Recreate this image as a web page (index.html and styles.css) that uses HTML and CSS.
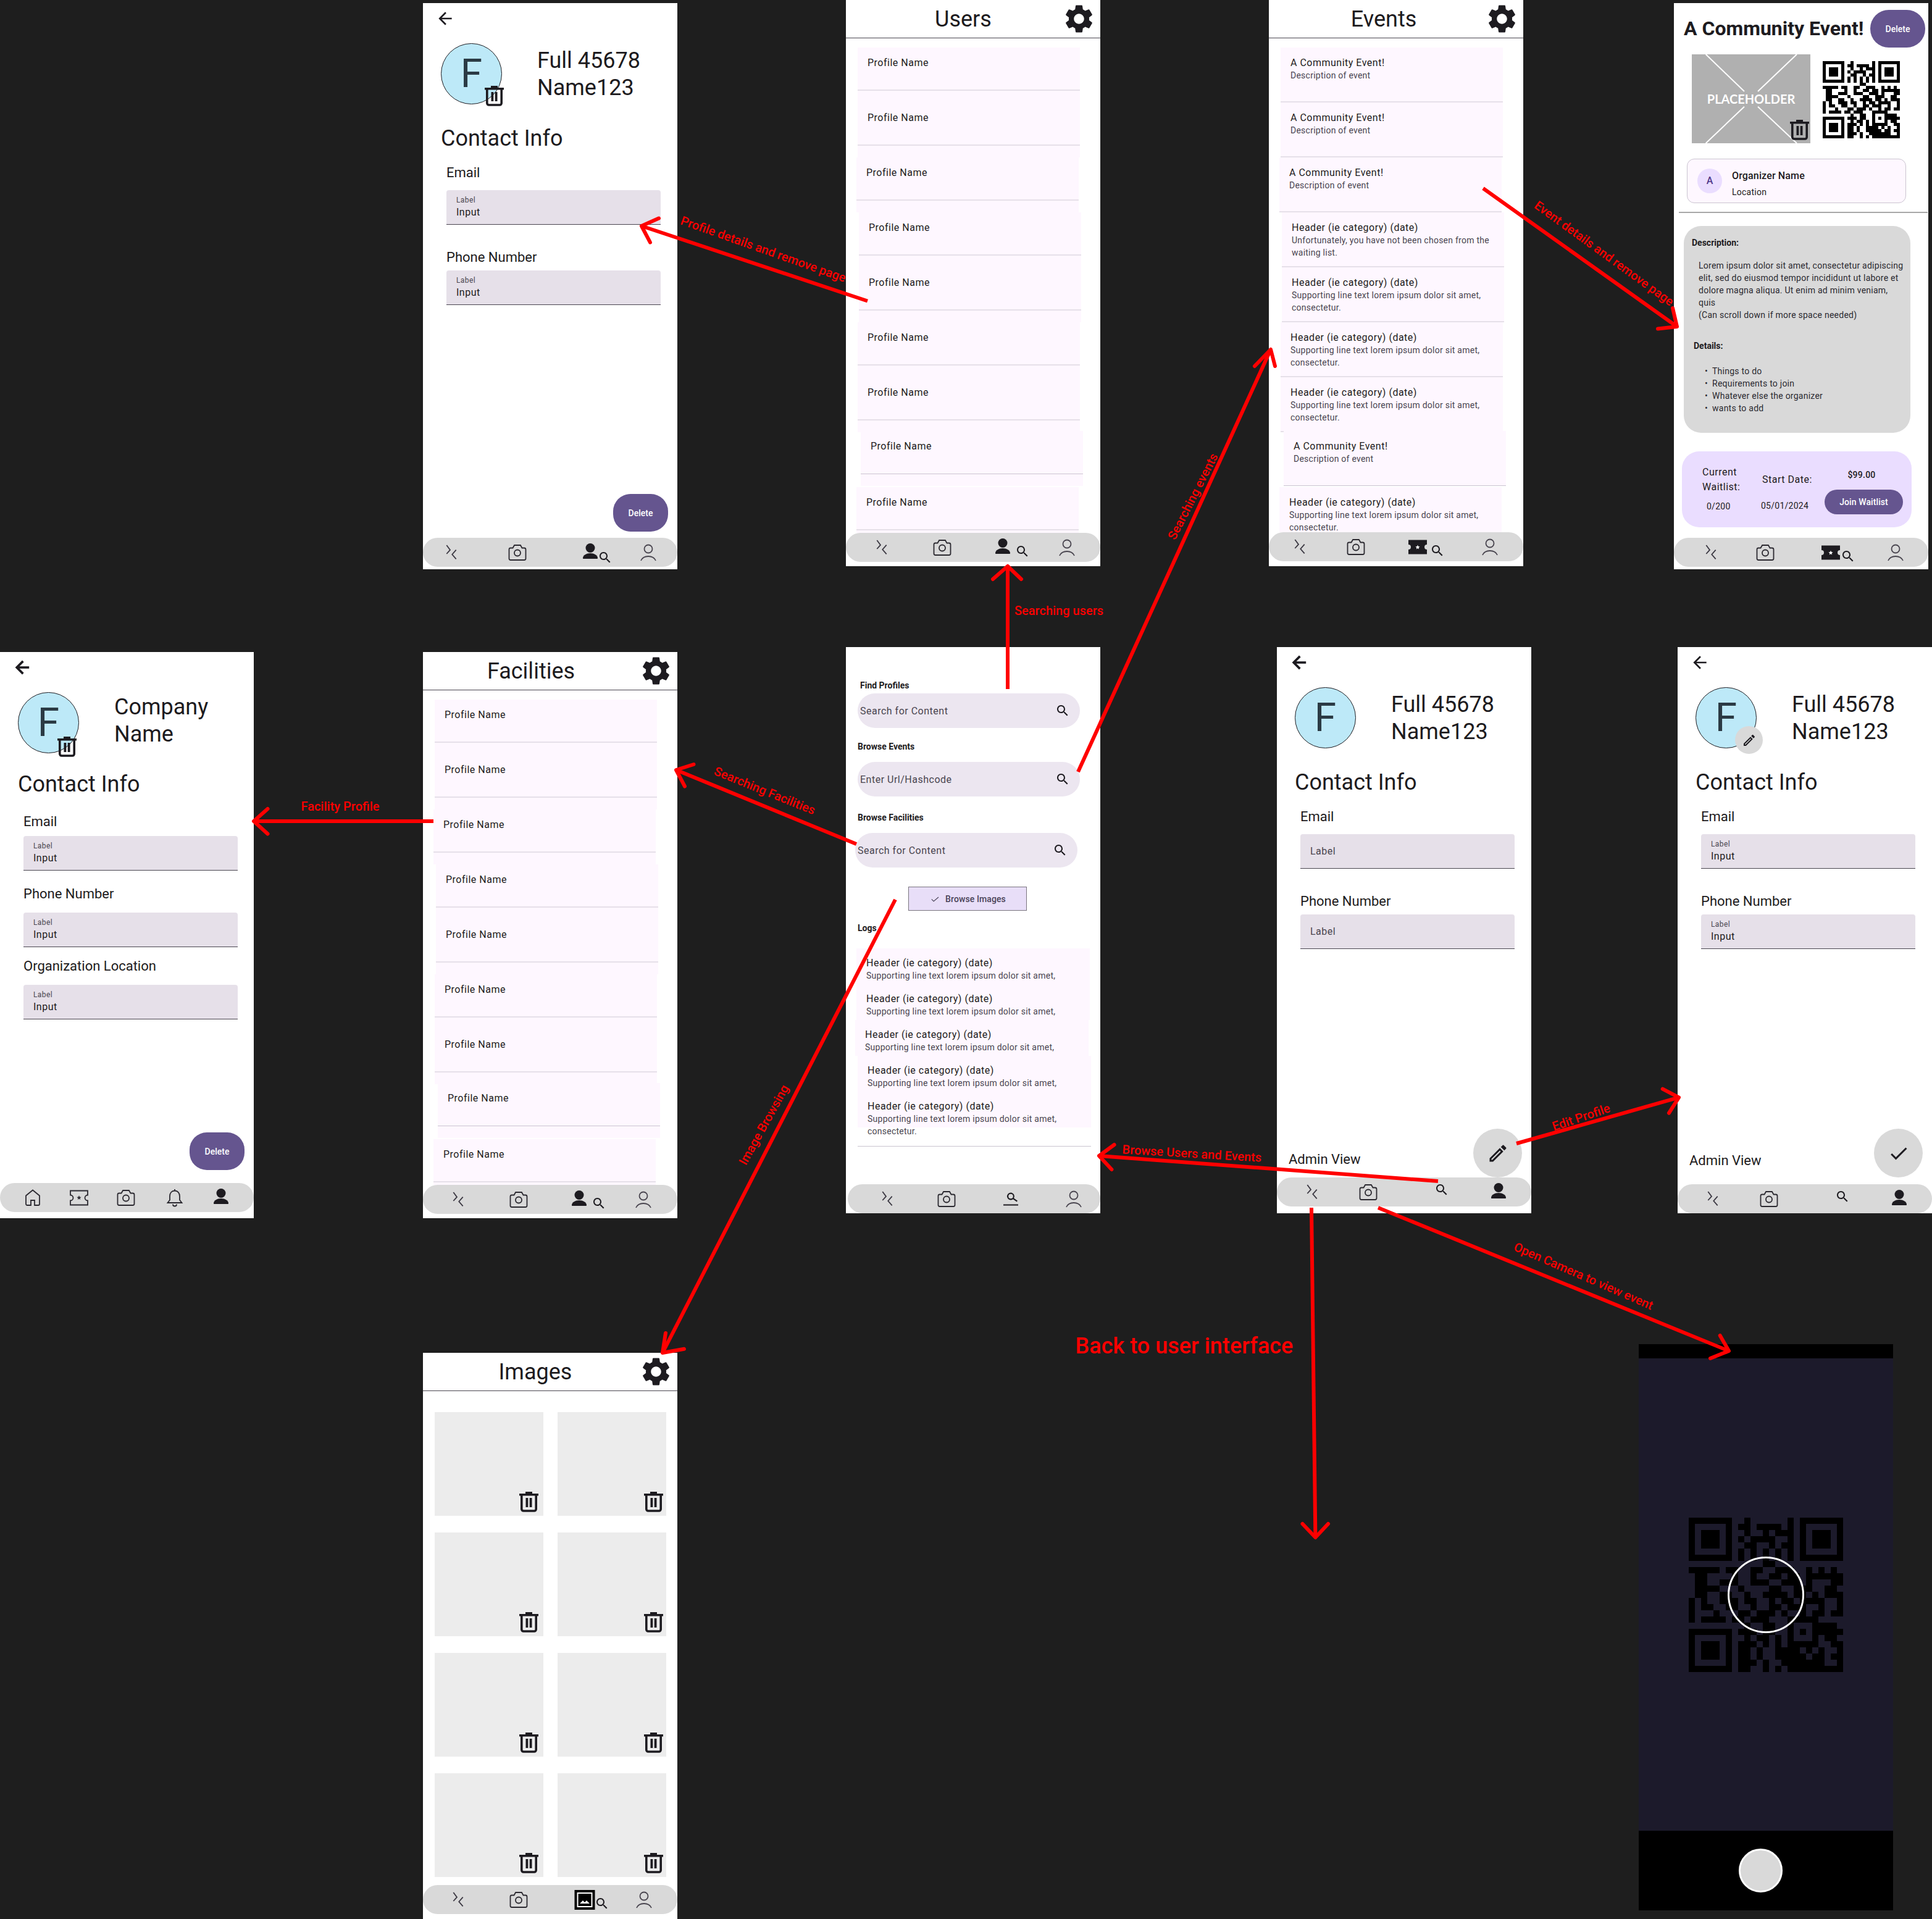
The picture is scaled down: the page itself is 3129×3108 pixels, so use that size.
FILE: index.html
```html
<!DOCTYPE html>
<html lang="en">
<head>
    <meta charset="UTF-8">
    <title>Admin Wireframes</title>
    <link rel="stylesheet" href="styles.css">
</head>
<body>
    <svg class="sprite" xmlns="http://www.w3.org/2000/svg">
        <symbol id="i-swap" viewBox="0 0 36 36"><path d="M10.3 6l5.7 7.7-5.7 6.3M25.7 13.7L19.300 21l6.400 7.300" fill="none" stroke="#3b3842" stroke-width="1.8"/></symbol>
        <symbol id="i-camera" viewBox="0 0 36 36"><path d="M7 10.500h3.500l2.600-4.500h9.800l2.600 4.500H29a2.500 2.500 0 0 1 2.500 2.500v14.500a2.500 2.500 0 0 1-2.500 2.500H7a2.500 2.500 0 0 1-2.500-2.500V13A2.500 2.500 0 0 1 7 10.500z" fill="none" stroke="#2b2930" stroke-width="1.800"/><circle cx="18" cy="18.500" r="5" fill="none" stroke="#2b2930" stroke-width="1.800"/></symbol>
        <symbol id="i-person" viewBox="0 0 36 36"><circle cx="18" cy="10.500" r="7.500" fill="#1d1b20"/><path d="M6 27c0-5 6-8 12-8s12 3 12 8c0 .8-.5 1-1 1H7c-.5 0-1-.2-1-1z" fill="#1d1b20"/></symbol>
        <symbol id="i-profile" viewBox="0 0 36 36"><circle cx="18" cy="12" r="6.500" fill="none" stroke="#49454f" stroke-width="1.800"/><path d="M6 31c2-4.500 7-7 12-7s10 2.500 12 7" fill="none" stroke="#49454f" stroke-width="1.800"/></symbol>
        <symbol id="i-search" viewBox="0 0 24 24"><path d="M15.500 14h-.79l-.28-.27C15.410 12.590 16 11.110 16 9.500 16 5.910 13.090 3 9.500 3S3 5.910 3 9.500 5.910 16 9.500 16c1.610 0 3.090-.59 4.230-1.570l.27.28v.79l5 4.990L20.490 19l-4.990-5zm-6 0C7.010 14 5 11.990 5 9.500S7.010 5 9.500 5 14 7.010 14 9.500 11.990 14 9.500 14z" fill="#1d1b20"/></symbol>
        <symbol id="i-search-line" viewBox="0 0 36 36"><path d="M18 7.500a6 6 0 1 0 3.700 10.700l6 4.300 1.300-1.800-6-4.200A6 6 0 0 0 18 7.500zm0 2.200a3.800 3.800 0 1 1 0 7.600 3.800 3.800 0 0 1 0-7.600z" fill="#1d1b20"/><path d="M6 27.500h24" stroke="#1d1b20" stroke-width="2"/></symbol>
        <symbol id="i-ticket" viewBox="0 0 36 36"><path d="M3 6.500h30v7.500a4 4 0 0 0 0 8v7.500H3V22a4 4 0 0 0 0-8z" fill="#1d1b20"/><path d="M18 14.500l1 2.500 2.600.2-2 1.700.6 2.600-2.200-1.400-2.200 1.400.6-2.600-2-1.700 2.600-.2z" fill="#fff"/></symbol>
        <symbol id="i-ticket-line" viewBox="0 0 36 36"><path d="M4 6.500h28v7a4.500 4.500 0 0 0 0 9v7H4v-7a4.500 4.500 0 0 0 0-9z" fill="none" stroke="#2b2930" stroke-width="1.800"/><path d="M18 14l1 2.500 2.600.2-2 1.700.6 2.600-2.200-1.400-2.200 1.400.6-2.600-2-1.700 2.600-.2z" fill="#2b2930"/></symbol>
        <symbol id="i-home" viewBox="0 0 36 36"><path d="M7 14.500l11-9 11 9V28a2 2 0 0 1-2 2h-6v-8h-6v8H9a2 2 0 0 1-2-2z" fill="none" stroke="#2b2930" stroke-width="1.800"/></symbol>
        <symbol id="i-bell" viewBox="0 0 36 36"><path d="M18 6.500c-5 0-8 3.800-8 9v6l-3.500 4.500h23L26 21.500v-6c0-5.200-3-9-8-9zM15 28.500a3 3 0 0 0 6 0M18 4v2.500" fill="none" stroke="#2b2930" stroke-width="1.800"/></symbol>
        <symbol id="i-image" viewBox="0 0 36 36"><rect x="1.500" y="2" width="33" height="32" fill="#000"/><rect x="6.500" y="7" width="23" height="22" fill="none" stroke="#fff" stroke-width="2"/><path d="M10 24l5-5 3 3 3-3 5 5z" fill="#fff"/></symbol>
        <symbol id="i-trash" viewBox="0 0 31 34"><rect x="0" y="4" width="31" height="3.500" fill="#1d1b20"/><rect x="10" y="1" width="11" height="4" fill="#1d1b20"/><path d="M3.800 7v22a3 3 0 0 0 3 3h17.400a3 3 0 0 0 3-3V7" fill="none" stroke="#1d1b20" stroke-width="3.600"/><rect x="10.500" y="11" width="3.800" height="15" fill="#1d1b20"/><rect x="16.700" y="11" width="3.800" height="15" fill="#1d1b20"/></symbol>
        <symbol id="i-gear" viewBox="0 0 24 24"><path d="M19.140 12.940c.04-.3.06-.61.06-.94 0-.32-.02-.64-.07-.94l2.030-1.580c.18-.14.23-.41.12-.61l-1.920-3.320c-.12-.22-.37-.29-.59-.22l-2.390.96c-.5-.38-1.030-.7-1.620-.94l-.36-2.540c-.04-.24-.24-.41-.48-.41h-3.840c-.24 0-.43.17-.47.41l-.36 2.540c-.59.24-1.130.57-1.620.94l-2.390-.96c-.22-.08-.47 0-.59.22L2.740 8.870c-.12.21-.08.47.12.61l2.030 1.580c-.05.3-.09.63-.09.94s.02.64.07.94l-2.030 1.580c-.18.14-.23.41-.12.61l1.920 3.320c.12.22.37.29.59.22l2.390-.96c.5.38 1.030.7 1.620.94l.36 2.540c.05.24.24.41.48.41h3.840c.24 0 .44-.17.47-.41l.36-2.540c.59-.24 1.130-.56 1.620-.94l2.390.96c.22.08.47 0 .59-.22l1.920-3.320c.12-.22.07-.47-.12-.61l-2.010-1.580zM12 15.600c-1.980 0-3.600-1.620-3.600-3.600s1.620-3.600 3.600-3.600 3.600 1.620 3.600 3.600-1.620 3.600-3.600 3.600z" fill="#1d1b20"/></symbol>
        <symbol id="i-back" viewBox="0 0 24 24"><path d="M20 11H7.830l5.590-5.590L12 4l-8 8 8 8 1.410-1.410L7.830 13H20v-2z" fill="#1d1b20"/></symbol>
        <symbol id="i-pencil" viewBox="0 0 24 24"><path d="M3 17.250V21h3.750L17.810 9.940l-3.750-3.750L3 17.250zM5.920 19H5v-.92l9.060-9.060.92.920L5.920 19zM20.710 7.040c.39-.39.39-1.020 0-1.410l-2.340-2.340c-.39-.39-1.020-.39-1.410 0l-1.830 1.830 3.750 3.750 1.830-1.830z" fill="#1d1b20"/></symbol>
        <symbol id="i-check" viewBox="0 0 24 24"><path d="M9 16.170L4.830 12l-1.420 1.410L9 19 21 7l-1.410-1.410z" fill="#1d1b20"/></symbol>
        <symbol id="i-qr" viewBox="0 0 25 25"><path fill="none" stroke="#000" stroke-width="1" d="M0 .5h7M9 .5h1M16 .5h1M18 .5h7M0 1.500h1M6 1.500h1M8 1.500h2M11 1.500h4M16 1.500h1M18 1.500h1M24 1.500h1M0 2.500h1M2 2.500h3M6 2.500h1M9 2.500h1M12 2.500h1M14 2.500h3M18 2.500h1M20 2.500h3M24 2.500h1M0 3.500h1M2 3.500h3M6 3.500h1M8 3.500h1M10 3.500h4M16 3.500h1M18 3.500h1M20 3.500h3M24 3.500h1M0 4.500h1M2 4.500h3M6 4.500h1M9 4.500h2M13 4.500h1M15 4.500h2M18 4.500h1M20 4.500h3M24 4.500h1M0 5.500h1M6 5.500h1M8 5.500h1M10 5.500h1M12 5.500h1M14 5.500h1M16 5.500h1M18 5.500h1M24 5.500h1M0 6.500h7M8 6.500h1M10 6.500h1M12 6.500h1M14 6.500h1M16 6.500h1M18 6.500h7M12 7.500h2M0 8.500h5M6 8.500h2M10 8.500h2M14 8.500h3M19 8.500h1M21 8.500h1M23 8.500h1M1 9.500h2M7 9.500h1M10 9.500h1M13 9.500h2M16 9.500h2M19 9.500h2M21 9.500h2M23 9.500h2M1 10.500h2M5 10.500h3M10 10.500h3M15 10.500h3M19 10.500h1M23 10.500h2M1 11.500h4M8 11.500h1M13 11.500h2M17 11.500h3M22 11.500h2M1 12.500h2M5 12.500h2M9 12.500h1M12 12.500h3M15 12.500h1M17 12.500h2M20 12.500h1M22 12.500h3M0 13.500h1M2 13.500h1M5 13.500h3M9 13.500h2M13 13.500h1M15 13.500h2M18 13.500h3M21 13.500h1M24 13.500h1M0 14.500h1M2 14.500h2M6 14.500h2M10 14.500h1M13 14.500h2M16 14.500h3M21 14.500h1M24 14.500h1M0 15.500h1M4 15.500h1M8 15.500h2M11 15.500h3M15 15.500h1M18 15.500h1M20 15.500h2M23 15.500h2M0 16.500h1M2 16.500h4M7 16.500h2M10 16.500h3M16 16.500h5M9 17.500h1M12 17.500h2M16 17.500h1M20 17.500h4M0 18.500h7M8 18.500h3M12 18.500h2M16 18.500h1M18 18.500h1M20 18.500h5M0 19.500h1M6 19.500h1M9 19.500h1M11 19.500h2M14 19.500h1M16 19.500h1M20 19.500h1M22 19.500h2M0 20.500h1M2 20.500h3M6 20.500h1M8 20.500h3M12 20.500h1M14 20.500h1M16 20.500h5M23 20.500h2M0 21.500h1M2 21.500h3M6 21.500h1M8 21.500h2M11 21.500h1M14 21.500h4M19 21.500h1M21 21.500h1M24 21.500h1M0 22.500h1M2 22.500h3M6 22.500h1M8 22.500h2M11 22.500h1M14 22.500h5M20 22.500h2M23 22.500h2M0 23.500h1M6 23.500h1M8 23.500h3M12 23.500h1M15 23.500h7M24 23.500h1M0 24.500h7M8 24.500h2M12 24.500h1M14 24.500h1M16 24.500h9"/></symbol>
    </svg>

    <main class="canvas">

        <!-- profile details -->
        <section class="frame f-detail">
            <svg class="back"><use href="#i-back"/></svg>
            <div class="profile-head">
                <div class="avatar">F
                    <svg class="avatar-trash"><use href="#i-trash"/></svg>
                </div>
                <div class="full-name">Full 45678<br>Name123</div>
            </div>
            <h2 class="contact-title">Contact Info</h2>
            <div class="field field-first">
                <div class="field-label">Email</div>
                <div class="input"><span class="input-label">Label</span><span class="input-value">Input</span></div>
            </div>
            <div class="field">
                <div class="field-label">Phone Number</div>
                <div class="input"><span class="input-label">Label</span><span class="input-value">Input</span></div>
            </div>
            <button class="delete-fab">Delete</button>
            <nav class="nav nav-detail">
                <span class="nav-item"><svg><use href="#i-swap"/></svg></span>
                <span class="nav-item"><svg><use href="#i-camera"/></svg></span>
                <span class="nav-item"><svg><use href="#i-person"/></svg><svg class="mag"><use href="#i-search"/></svg></span>
                <span class="nav-item"><svg><use href="#i-profile"/></svg></span>
            </nav>
        </section>

        <!-- users -->
        <section class="frame f-users">
            <header class="list-head">
                <h1 class="list-title">Users</h1>
                <svg class="gear"><use href="#i-gear"/></svg>
            </header>
            <div class="list">
                <div class="item item-short">Profile Name</div>
                <div class="item item-short">Profile Name</div>
                <div class="item item-short item-l">Profile Name</div>
                <div class="item item-short item-r">Profile Name</div>
                <div class="item item-short item-r">Profile Name</div>
                <div class="item item-short">Profile Name</div>
                <div class="item item-short">Profile Name</div>
                <div class="item item-short item-far item-thin">Profile Name</div>
                <div class="item item-short item-l">Profile Name</div>
            </div>
            <nav class="nav nav-users">
                <span class="nav-item"><svg><use href="#i-swap"/></svg></span>
                <span class="nav-item"><svg><use href="#i-camera"/></svg></span>
                <span class="nav-item"><svg><use href="#i-person"/></svg><svg class="mag"><use href="#i-search"/></svg></span>
                <span class="nav-item"><svg><use href="#i-profile"/></svg></span>
            </nav>
        </section>

        <!-- events -->
        <section class="frame f-events">
            <header class="list-head">
                <h1 class="list-title">Events</h1>
                <svg class="gear"><use href="#i-gear"/></svg>
            </header>
            <div class="list">
                <div class="item">A Community Event!<p>Description of event</p></div>
                <div class="item">A Community Event!<p>Description of event</p></div>
                <div class="item item-l">A Community Event!<p>Description of event</p></div>
                <div class="item item-r">Header (ie category) (date)<p>Unfortunately, you have not been chosen from the waiting list.</p></div>
                <div class="item item-r">Header (ie category) (date)<p>Supporting line text lorem ipsum dolor sit amet, consectetur.</p></div>
                <div class="item">Header (ie category) (date)<p>Supporting line text lorem ipsum dolor sit amet, consectetur.</p></div>
                <div class="item">Header (ie category) (date)<p>Supporting line text lorem ipsum dolor sit amet, consectetur.</p></div>
                <div class="item item-far item-thin">A Community Event!<p>Description of event</p></div>
                <div class="item item-l">Header (ie category) (date)<p>Supporting line text lorem ipsum dolor sit amet, consectetur.</p></div>
            </div>
            <nav class="nav nav-events">
                <span class="nav-item"><svg><use href="#i-swap"/></svg></span>
                <span class="nav-item"><svg><use href="#i-camera"/></svg></span>
                <span class="nav-item"><svg><use href="#i-ticket"/></svg><svg class="mag"><use href="#i-search"/></svg></span>
                <span class="nav-item"><svg><use href="#i-profile"/></svg></span>
            </nav>
        </section>

        <!-- event details -->
        <section class="frame f-event">
            <div class="event-top">
                <h1 class="event-title">A Community Event!</h1>
                <button class="delete-btn">Delete</button>
            </div>
            <div class="event-media">
                <div class="placeholder">
                    <svg class="placeholder-x" viewBox="0 0 192 144"><path d="M22.700 0L85 60M170 0L107 60M22.700 144L85 84.700M170 144L107 84.700" stroke="#fff" stroke-width="2"/></svg>
                    <span class="placeholder-text">PLACEHOLDER</span>
                    <svg class="placeholder-trash"><use href="#i-trash"/></svg>
                </div>
                <svg class="event-qr" shape-rendering="crispEdges"><use href="#i-qr"/></svg>
            </div>
            <div class="organizer">
                <div class="org-avatar">A</div>
                <div class="org-text">
                    <div class="org-name">Organizer Name</div>
                    <div class="org-place">Location</div>
                </div>
            </div>
            <div class="event-rule"></div>
            <div class="about">
                <h3 class="about-head">Description:</h3>
                <p class="about-text">Lorem ipsum dolor sit amet, consectetur adipiscing<br>elit, sed do eiusmod tempor incididunt ut labore et<br>dolore magna aliqua. Ut enim ad minim veniam,<br>quis<br>(Can scroll down if more space needed)</p>
                <h3 class="about-head about-details">Details:</h3>
                <ul class="about-list">
                    <li>Things to do</li>
                    <li>Requirements to join</li>
                    <li>Whatever else the organizer</li>
                    <li>wants to add</li>
                </ul>
            </div>
            <div class="waitlist">
                <div class="wait-col">
                    <div class="wait-big">Current<br>Waitlist:</div>
                    <div class="wait-count">0/200</div>
                </div>
                <div class="wait-col wait-date">
                    <div class="wait-big">Start Date:</div>
                    <div class="wait-day">05/01/2024</div>
                </div>
                <div class="wait-col wait-buy">
                    <div class="wait-price">$99.00</div>
                    <button class="join-btn">Join Waitlist</button>
                </div>
            </div>
            <nav class="nav nav-event">
                <span class="nav-item"><svg><use href="#i-swap"/></svg></span>
                <span class="nav-item"><svg><use href="#i-camera"/></svg></span>
                <span class="nav-item"><svg><use href="#i-ticket"/></svg><svg class="mag"><use href="#i-search"/></svg></span>
                <span class="nav-item"><svg><use href="#i-profile"/></svg></span>
            </nav>
        </section>

        <!-- facility profile -->
        <section class="frame f-company">
            <svg class="back"><use href="#i-back"/></svg>
            <div class="profile-head">
                <div class="avatar">F
                    <svg class="avatar-trash"><use href="#i-trash"/></svg>
                </div>
                <div class="full-name">Company<br>Name</div>
            </div>
            <h2 class="contact-title">Contact Info</h2>
            <div class="field field-first">
                <div class="field-label">Email</div>
                <div class="input"><span class="input-label">Label</span><span class="input-value">Input</span></div>
            </div>
            <div class="field">
                <div class="field-label">Phone Number</div>
                <div class="input"><span class="input-label">Label</span><span class="input-value">Input</span></div>
            </div>
            <div class="field">
                <div class="field-label">Organization Location</div>
                <div class="input"><span class="input-label">Label</span><span class="input-value">Input</span></div>
            </div>
            <button class="delete-fab">Delete</button>
            <nav class="nav nav-company">
                <span class="nav-item"><svg><use href="#i-home"/></svg></span>
                <span class="nav-item"><svg><use href="#i-ticket-line"/></svg></span>
                <span class="nav-item"><svg><use href="#i-camera"/></svg></span>
                <span class="nav-item"><svg><use href="#i-bell"/></svg></span>
                <span class="nav-item"><svg><use href="#i-person"/></svg></span>
            </nav>
        </section>

        <!-- facilities -->
        <section class="frame f-facilities">
            <header class="list-head">
                <h1 class="list-title">Facilities</h1>
                <svg class="gear"><use href="#i-gear"/></svg>
            </header>
            <div class="list">
                <div class="item item-short">Profile Name</div>
                <div class="item item-short">Profile Name</div>
                <div class="item item-short item-l">Profile Name</div>
                <div class="item item-short item-r">Profile Name</div>
                <div class="item item-short item-r">Profile Name</div>
                <div class="item item-short">Profile Name</div>
                <div class="item item-short">Profile Name</div>
                <div class="item item-short item-far item-thin">Profile Name</div>
                <div class="item item-short item-l">Profile Name</div>
            </div>
            <nav class="nav nav-users">
                <span class="nav-item"><svg><use href="#i-swap"/></svg></span>
                <span class="nav-item"><svg><use href="#i-camera"/></svg></span>
                <span class="nav-item"><svg><use href="#i-person"/></svg><svg class="mag"><use href="#i-search"/></svg></span>
                <span class="nav-item"><svg><use href="#i-profile"/></svg></span>
            </nav>
        </section>

        <!-- admin search -->
        <section class="frame f-browse">
            <div class="find-label find-first">Find Profiles</div>
            <div class="search">Search for Content<svg><use href="#i-search"/></svg></div>
            <div class="find-label">Browse Events</div>
            <div class="search">Enter Url/Hashcode<svg><use href="#i-search"/></svg></div>
            <div class="find-label">Browse Facilities</div>
            <div class="search search-left">Search for Content<svg><use href="#i-search"/></svg></div>
            <button class="browse-btn"><svg viewBox="0 0 24 24"><path d="M5 12.500l4.500 4.500L20 8" fill="none" stroke="#4a4459" stroke-width="1.500"/></svg>Browse Images</button>
            <div class="find-label find-logs">Logs</div>
            <div class="logs">
                <div class="log">Header (ie category) (date)<p>Supporting line text lorem ipsum dolor sit amet,</p></div>
                <div class="log">Header (ie category) (date)<p>Supporting line text lorem ipsum dolor sit amet,</p></div>
                <div class="log log-l">Header (ie category) (date)<p>Supporting line text lorem ipsum dolor sit amet,</p></div>
                <div class="log log-r">Header (ie category) (date)<p>Supporting line text lorem ipsum dolor sit amet,</p></div>
                <div class="log log-r">Header (ie category) (date)<p>Supporting line text lorem ipsum dolor sit amet, consectetur.</p></div>
            </div>
            <div class="log-rule"></div>
            <nav class="nav nav-browse">
                <span class="nav-item"><svg><use href="#i-swap"/></svg></span>
                <span class="nav-item"><svg><use href="#i-camera"/></svg></span>
                <span class="nav-item"><svg><use href="#i-search-line"/></svg></span>
                <span class="nav-item"><svg><use href="#i-profile"/></svg></span>
            </nav>
        </section>

        <!-- admin profile -->
        <section class="frame f-admin">
            <svg class="back"><use href="#i-back"/></svg>
            <div class="profile-head">
                <div class="avatar">F</div>
                <div class="full-name">Full 45678<br>Name123</div>
            </div>
            <h2 class="contact-title">Contact Info</h2>
            <div class="field field-first">
                <div class="field-label">Email</div>
                <div class="input input-empty">Label</div>
            </div>
            <div class="field">
                <div class="field-label">Phone Number</div>
                <div class="input input-empty">Label</div>
            </div>
            <div class="admin-view">Admin View</div>
            <button class="round-fab"><svg><use href="#i-pencil"/></svg></button>
            <nav class="nav nav-admin">
                <span class="nav-item"><svg><use href="#i-swap"/></svg></span>
                <span class="nav-item"><svg><use href="#i-camera"/></svg></span>
                <span class="nav-item"><svg class="nav-mag"><use href="#i-search"/></svg></span>
                <span class="nav-item"><svg><use href="#i-person"/></svg></span>
            </nav>
        </section>

        <!-- admin profile, editing -->
        <section class="frame f-edit">
            <svg class="back"><use href="#i-back"/></svg>
            <div class="profile-head">
                <div class="avatar">F
                    <span class="avatar-edit"><svg><use href="#i-pencil"/></svg></span>
                </div>
                <div class="full-name">Full 45678<br>Name123</div>
            </div>
            <h2 class="contact-title">Contact Info</h2>
            <div class="field field-first">
                <div class="field-label">Email</div>
                <div class="input"><span class="input-label">Label</span><span class="input-value">Input</span></div>
            </div>
            <div class="field">
                <div class="field-label">Phone Number</div>
                <div class="input"><span class="input-label">Label</span><span class="input-value">Input</span></div>
            </div>
            <div class="admin-view">Admin View</div>
            <button class="round-fab"><svg><use href="#i-check"/></svg></button>
            <nav class="nav nav-admin">
                <span class="nav-item"><svg><use href="#i-swap"/></svg></span>
                <span class="nav-item"><svg><use href="#i-camera"/></svg></span>
                <span class="nav-item"><svg class="nav-mag"><use href="#i-search"/></svg></span>
                <span class="nav-item"><svg><use href="#i-person"/></svg></span>
            </nav>
        </section>

        <!-- images -->
        <section class="frame f-images">
            <header class="list-head">
                <h1 class="list-title">Images</h1>
                <svg class="gear"><use href="#i-gear"/></svg>
            </header>
            <div class="thumbs">
                <div class="thumb"><svg><use href="#i-trash"/></svg></div>
                <div class="thumb"><svg><use href="#i-trash"/></svg></div>
                <div class="thumb"><svg><use href="#i-trash"/></svg></div>
                <div class="thumb"><svg><use href="#i-trash"/></svg></div>
                <div class="thumb"><svg><use href="#i-trash"/></svg></div>
                <div class="thumb"><svg><use href="#i-trash"/></svg></div>
                <div class="thumb"><svg><use href="#i-trash"/></svg></div>
                <div class="thumb"><svg><use href="#i-trash"/></svg></div>
            </div>
            <nav class="nav nav-images">
                <span class="nav-item"><svg><use href="#i-swap"/></svg></span>
                <span class="nav-item"><svg><use href="#i-camera"/></svg></span>
                <span class="nav-item"><svg><use href="#i-image"/></svg><svg class="mag mag-image"><use href="#i-search"/></svg></span>
                <span class="nav-item"><svg><use href="#i-profile"/></svg></span>
            </nav>
        </section>

        <!-- camera -->
        <section class="frame f-camera">
            <div class="cam-top"></div>
            <div class="cam-view">
                <div class="cam-qr">
                    <svg shape-rendering="crispEdges"><use href="#i-qr"/></svg>
                    <div class="cam-ring"></div>
                </div>
            </div>
            <div class="cam-bottom"><div class="shutter"></div></div>
        </section>

        <!-- flow arrows between the screens -->
        <svg class="flows" viewBox="0 0 3129 3108">
            <path class="flow-line" d="M1405 487.500L1039 366"/>
            <path class="flow-head" d="M1067 353.500L1039 366L1053 392.600"/>
            <text class="flow-label" transform="translate(1234 410) rotate(19.500)">Profile details and remove page</text>

            <path class="flow-line" d="M1632 1116V916"/>
            <path class="flow-head" d="M1608 938L1632 917L1654 938"/>
            <text class="flow-label" x="1715" y="996">Searching users</text>

            <path class="flow-line" d="M1746 1250L2058 566"/>
            <path class="flow-head" d="M2032 593L2058 566L2065 593"/>
            <text class="flow-label" transform="translate(1938 807) rotate(-63)">Searching events</text>

            <path class="flow-line" d="M2402 305L2716 529"/>
            <path class="flow-head" d="M2709 499L2716 529L2685 532.600"/>
            <text class="flow-label" transform="translate(2594 416) rotate(36)">Event details and remove page</text>

            <path class="flow-line" d="M702 1330H411"/>
            <path class="flow-head" d="M433.500 1310L411 1330L433.500 1350.500"/>
            <text class="flow-label" x="551" y="1313">Facility Profile</text>

            <path class="flow-line" d="M1387 1367L1095 1247"/>
            <path class="flow-head" d="M1123.500 1238L1095 1247L1109 1273.500"/>
            <text class="flow-label" transform="translate(1236 1287) rotate(22)">Searching Facilities</text>

            <path class="flow-line" d="M1450 1457L1073 2191"/>
            <path class="flow-head" d="M1078 2159L1073 2191L1108 2184.700"/>
            <text class="flow-label" transform="translate(1243 1825) rotate(-61)">Image Browsing</text>

            <path class="flow-line" d="M2329 1913L1780 1872"/>
            <path class="flow-head" d="M1804.600 1854L1780 1872L1800.400 1894"/>
            <text class="flow-label" transform="translate(1930 1875) rotate(3.400)">Browse Users and Events</text>

            <path class="flow-line" d="M2124 1956L2130.400 2490"/>
            <path class="flow-head" d="M2109.500 2468L2130.400 2490L2151 2468"/>
            <text class="flow-label flow-big" x="1918" y="2192">Back to user interface</text>

            <path class="flow-line" d="M2456 1852L2719 1777.400"/>
            <path class="flow-head" d="M2692.700 1763.600L2719 1777.400L2703 1802.600"/>
            <text class="flow-label" transform="translate(2563 1816) rotate(-18.600)">Edit Profile</text>

            <path class="flow-line" d="M2232 1956L2800 2188"/>
            <path class="flow-head" d="M2785.700 2163L2800 2188L2770 2200"/>
            <text class="flow-label" transform="translate(2562 2073) rotate(23.500)">Open Camera to view event</text>
        </svg>
    </main>
</body>
</html>
```

FILE: styles.css
```css
* {
    box-sizing: border-box;
}
body {
    margin: 0;
    background-color: #1e1e1e;
    font-family: Roboto, sans-serif;
    color: #1d1b20;
}
h1, h2, h3, p, ul {
    margin: 0;
    padding: 0;
    font-weight: 400;
}
button {
    font-family: Roboto, sans-serif;
    border: none;
    padding: 0;
}
.sprite {
    display: none;
}
.canvas {
    position: relative;
    width: 3129px;
    height: 3108px;
    overflow: hidden;
}

/* screens sit free on the canvas */
.frame {
    position: absolute;
    width: 412px;
    height: 917px;
    background: white;
    display: flex;
    flex-direction: column;
    overflow: hidden;
}
.f-detail { left: 685px; top: 5px; }
.f-users { left: 1370px; top: 0; }
.f-events { left: 2055px; top: 0; }
.f-event { left: 2711px; top: 5px; }
.f-company { left: 0; top: 1056px; width: 411px; }
.f-facilities { left: 685px; top: 1056px; }
.f-browse { left: 1370px; top: 1048px; }
.f-admin { left: 2068px; top: 1048px; }
.f-edit { left: 2717px; top: 1048px; }
.f-images { left: 685px; top: 2191px; }
.f-camera { left: 2654px; top: 2177px; }

/* bottom bar */
.nav {
    flex: none;
    height: 47px;
    margin-top: auto;
    border-radius: 24px;
    background: #d9d9d9;
    display: grid;
    align-items: center;
    justify-items: start;
}
.nav-item {
    position: relative;
    width: 36px;
    height: 36px;
    display: flex;
}
.nav-item svg {
    width: 36px;
    height: 36px;
    flex: none;
}
.nav-item .mag {
    position: absolute;
    left: 38px;
    top: 12px;
    width: 24px;
    height: 24px;
}
.nav-item .mag-image {
    left: 34px;
}
.nav-item .nav-mag {
    width: 24px;
    height: 24px;
    margin: 2px 0 0 6px;
}
.nav-detail { padding-left: 28px; grid-template-columns: 107px 118px 94px 36px; margin-bottom: 4px; }
.nav-detail .nav-item .mag { left: 30px; top: 14px; }
.nav-users { padding-left: 40px; grid-template-columns: 98px 98px 104px 36px; margin-bottom: 7px; }
.f-facilities .nav-users { padding-left: 39px; }
.nav-events { padding-left: 32px; grid-template-columns: 91px 100px 117px 36px; margin-bottom: 8px; }
.nav-event { padding-left: 42px; grid-template-columns: 88px 106px 105px 36px; margin-bottom: 4px; }
.nav-event .nav-item .mag { left: 34px; }
.nav-company { padding-left: 35px; grid-template-columns: 75px 76px 79px 75px 36px; margin-bottom: 10px; }
.nav-browse { padding-left: 46px; grid-template-columns: 96px 104px 102px 36px; margin-left: 3px; }
.nav-admin { padding-left: 39px; grid-template-columns: 91px 119px 92px 36px; margin-top: 15px; }
.f-admin .nav-admin { margin-bottom: 11px; }
.f-edit .nav-admin { margin-top: 24px; }
.nav-images { padding-left: 39px; grid-template-columns: 98px 107px 96px 36px; margin-bottom: 8px; }

/* profile screens */
.back {
    flex: none;
    width: 32px;
    height: 32px;
    margin: 9px 0 9px 20px;
}
.f-company .back,
.f-admin .back {
    stroke: #1d1b20;
    stroke-width: .8;
}
.profile-head {
    flex: none;
    display: flex;
    align-items: center;
    padding: 15px 0 0 29px;
}
.avatar {
    position: relative;
    flex: none;
    width: 99px;
    height: 99px;
    border: 1px solid #1d1b20;
    border-radius: 50%;
    background: #bde9f8;
    color: #2b3a44;
    font-size: 64px;
    line-height: 97px;
    text-align: center;
}
.avatar-trash {
    position: absolute;
    left: 70px;
    top: 67px;
    width: 31px;
    height: 34px;
}
.avatar-edit {
    position: absolute;
    left: 63px;
    top: 62px;
    width: 45px;
    height: 45px;
    border-radius: 50%;
    background: #d9d9d9;
    display: flex;
    align-items: center;
    justify-content: center;
}
.avatar-edit svg {
    width: 24px;
    height: 24px;
}
.full-name {
    margin-left: 57px;
    font-size: 36px;
    line-height: 44px;
}
.contact-title {
    margin: 33px 0 0 29px;
    font-size: 36px;
    line-height: 44px;
}
.field {
    flex: none;
    margin: 39px 27px 0 38px;
}
.field-first {
    margin-top: 20px;
}
.field-label {
    font-size: 22px;
    line-height: 28px;
}
.input {
    height: 56px;
    margin-top: 7px;
    padding: 8px 16px 0;
    background: #e6e0e9;
    border-bottom: 1px solid #49454f;
    border-radius: 4px 4px 0 0;
    display: flex;
    flex-direction: column;
}
.field-first .input {
    margin-top: 14px;
}
.input-label {
    font-size: 12px;
    line-height: 16px;
    letter-spacing: .4px;
    color: #49454f;
}
.input-value {
    font-size: 16px;
    line-height: 24px;
    letter-spacing: .5px;
}
.input-empty {
    padding-top: 16px;
    font-size: 16px;
    line-height: 24px;
    letter-spacing: .5px;
    color: #49454f;
}
.f-company .full-name { margin-bottom: 8px; }
.f-company .contact-title { margin-top: 28px; }
.f-company .field { margin: 17px 26px 0 38px; }
.f-company .field-first { margin-top: 25px; }
.f-company .field-first + .field { margin-top: 24px; }
.f-company .input { margin-top: 16px; }
.f-company .field-first .input { margin-top: 9px; }
.f-company .avatar-trash { left: 63px; top: 70px; }
.delete-fab {
    position: absolute;
    width: 89px;
    height: 61px;
    right: 15px;
    top: 795px;
    border-radius: 28px;
    background: #65558f;
    color: white;
    font-size: 14px;
    font-weight: 500;
}
.f-company .delete-fab { right: 15px; top: 778px; }
.admin-view {
    margin: auto 0 0 19px;
    font-size: 22px;
    line-height: 28px;
}
.round-fab {
    position: absolute;
    left: 318px;
    top: 780px;
    width: 79px;
    height: 79px;
    border-radius: 50%;
    background: #d9d9d9;
    display: flex;
    align-items: center;
    justify-content: center;
}
.round-fab svg {
    width: 36px;
    height: 36px;
}

/* list screens */
.list-head {
    position: relative;
    flex: none;
    height: 62px;
    border-bottom: 1px solid #49454f;
}
.list-title {
    font-size: 36px;
    line-height: 62px;
    text-align: center;
}
.f-users .list-title { width: 380px; }
.f-events .list-title { width: 372px; }
.f-facilities .list-title { width: 350px; }
.f-images .list-title { width: 364px; }
.gear {
    position: absolute;
    right: 7px;
    top: 3px;
    width: 55px;
    height: 55px;
}
.list {
    flex: 1;
    min-height: 0;
    padding-top: 15px;
    overflow: hidden;
}
.item {
    position: relative;
    width: 360px;
    height: 89px;
    margin-left: 19px;
    padding: 13px 16px 12px;
    background: #fef7ff;
    font-size: 16px;
    line-height: 24px;
    letter-spacing: .5px;
}
.item p {
    margin-top: -2px;
    font-size: 14px;
    line-height: 20px;
    letter-spacing: .25px;
    color: #49454f;
}
.item::after {
    content: "";
    position: absolute;
    left: 0;
    right: 0;
    bottom: 0;
    height: 2px;
    background: #e6e0e9;
}
.item-short::after {
    bottom: 19px;
}
.item-l { margin-left: 17px; }
.item-r { margin-left: 21px; }
.item-far { margin-left: 24px; margin-top: -2px; margin-bottom: 2px; }
.item-thin::after {
    height: 1px;
    background: #cac4d0;
}

/* event details */
.event-top {
    flex: none;
    display: flex;
    align-items: center;
    justify-content: space-between;
    padding: 11px 5px 0 16px;
}
.event-title {
    font-size: 32px;
    font-weight: 700;
    line-height: 61px;
    white-space: nowrap;
}
.delete-btn {
    flex: none;
    width: 89px;
    height: 61px;
    border-radius: 30px;
    background: #65558f;
    color: white;
    font-size: 14px;
    font-weight: 500;
}
.event-media {
    flex: none;
    display: flex;
    margin: 11px 0 0 29px;
}
.placeholder {
    position: relative;
    width: 192px;
    height: 144px;
    background: #b0b0b0;
    display: flex;
    align-items: center;
    justify-content: center;
}
.placeholder-x {
    position: absolute;
    left: 0;
    top: 0;
    width: 192px;
    height: 144px;
}
.placeholder-text {
    font-family: Lato, sans-serif;
    font-size: 20px;
    font-weight: 700;
    color: white;
}
.placeholder-trash {
    position: absolute;
    right: 2px;
    bottom: 5px;
    width: 31px;
    height: 34px;
}
.event-qr {
    width: 125px;
    height: 125px;
    margin: 11px 0 0 20px;
}
.organizer {
    flex: none;
    width: 355px;
    height: 72px;
    margin: 25px 0 0 21px;
    padding-left: 16px;
    border: 1px solid #cac4d0;
    border-radius: 12px;
    background: #fef7ff;
    display: flex;
    align-items: center;
    gap: 16px;
}
.org-avatar {
    width: 40px;
    height: 40px;
    border-radius: 50%;
    background: #eaddff;
    color: #4f378a;
    font-size: 16px;
    font-weight: 500;
    line-height: 40px;
    text-align: center;
}
.org-text {
    padding-top: 8px;
}
.org-name {
    font-size: 16px;
    font-weight: 500;
    line-height: 24px;
    letter-spacing: .15px;
}
.org-place {
    margin-top: 4px;
    font-size: 14px;
    line-height: 20px;
    letter-spacing: .25px;
}
.event-rule {
    flex: none;
    height: 2px;
    margin: 14px 1px 0 8px;
    background: #a8a8a8;
}
.about {
    flex: none;
    width: 367px;
    height: 335px;
    margin: 21px 0 0 16px;
    padding: 17px 0 0 13px;
    border-radius: 28px;
    background: #d9d9d9;
    font-size: 14px;
    line-height: 20px;
    letter-spacing: .25px;
}
.about-head {
    font-size: 14px;
    font-weight: 700;
    letter-spacing: 0;
    line-height: 20px;
}
.about-text {
    margin: 17px 0 0 11px;
    white-space: nowrap;
    color: #2b2930;
}
.about-details {
    margin: 30px 0 0 3px;
}
.about-list {
    margin: 21px 0 0 21px;
    list-style: none;
    color: #2b2930;
}
.about-list li {
    display: flex;
}
.about-list li::before {
    content: "\2022";
    flex: none;
    width: 12px;
}
.waitlist {
    flex: none;
    width: 372px;
    height: 123px;
    margin: 30px 0 0 13px;
    padding-left: 33px;
    border-radius: 28px;
    background: #eaddff;
    display: grid;
    grid-template-columns: 97px 101px 127px;
}
.wait-col {
    padding-top: 22px;
}
.wait-big {
    font-size: 16px;
    line-height: 24px;
    letter-spacing: .5px;
}
.wait-count {
    margin: 9px 0 0 7px;
    font-size: 14px;
    line-height: 20px;
    letter-spacing: .25px;
}
.wait-date {
    padding-top: 34px;
}
.wait-day {
    margin: 20px 0 0 -2px;
    font-size: 14px;
    line-height: 20px;
    letter-spacing: .25px;
}
.wait-buy {
    padding-top: 28px;
}
.wait-price {
    margin-right: 7px;
    font-size: 14px;
    font-weight: 500;
    line-height: 20px;
    letter-spacing: .25px;
    text-align: center;
}
.join-btn {
    width: 127px;
    height: 40px;
    margin-top: 14px;
    border-radius: 20px;
    background: #65558f;
    color: white;
    font-size: 14px;
    font-weight: 500;
    letter-spacing: .1px;
}

/* admin search */
.find-label {
    flex: none;
    margin: 25px 0 17px 19px;
    padding-top: 1px;
    font-size: 14px;
    font-weight: 700;
    line-height: 16px;
}
.find-first {
    margin: 53px 0 5px 23px;
}
.f-browse .search + .find-label {
    margin-top: 21px;
}
.f-browse .search + .find-label + .search + .find-label {
    margin-top: 25px;
}
.search {
    flex: none;
    width: 360px;
    height: 56px;
    margin-left: 19px;
    padding: 0 16px 0 4px;
    border-radius: 28px;
    background: #ece6f0;
    color: #49454f;
    font-size: 16px;
    letter-spacing: .5px;
    display: flex;
    align-items: center;
    justify-content: space-between;
}
.search svg {
    width: 24px;
    height: 24px;
}
.search-left {
    margin-left: 15px;
}
.browse-btn {
    flex: none;
    width: 192px;
    height: 39px;
    margin: 31px 0 0 101px;
    border: 1px solid #79747e;
    background: #e8def8;
    color: #4a4459;
    font-size: 14px;
    font-weight: 500;
    letter-spacing: .1px;
    display: flex;
    align-items: center;
    justify-content: center;
    gap: 8px;
}
.browse-btn svg {
    width: 18px;
    height: 18px;
}
.find-logs {
    margin: 19px 0 25px 19px;
}
.log {
    width: 378px;
    height: 58px;
    margin-left: 17px;
    padding: 12px 16px 0;
    background: #fef7ff;
    font-size: 16px;
    line-height: 24px;
    letter-spacing: .5px;
}
.log p {
    margin-top: -2px;
    font-size: 14px;
    line-height: 20px;
    letter-spacing: .25px;
    color: #49454f;
}
.log-l { margin-left: 15px; }
.log-r { margin-left: 19px; }
.log-rule {
    flex: none;
    width: 378px;
    height: 1px;
    margin: 30px 0 0 19px;
    background: #cac4d0;
}

/* images */
.thumbs {
    margin: 34px 0 0 19px;
    display: grid;
    grid-template-columns: 176px 176px;
    column-gap: 23px;
    row-gap: 27px;
}
.thumb {
    height: 168px;
    padding: 0 8px 6px 0;
    background: #ececec;
    display: flex;
    align-items: flex-end;
    justify-content: flex-end;
}
.thumb:nth-child(even) {
    padding-right: 5px;
}
.thumb svg {
    width: 31px;
    height: 34px;
}

/* camera */
.cam-top {
    flex: none;
    height: 23px;
    background: black;
}
.cam-view {
    flex: 1;
    background: #1c1a2b;
    display: flex;
    align-items: center;
    justify-content: center;
}
.cam-qr {
    position: relative;
    width: 250px;
    height: 250px;
}
.cam-qr svg {
    width: 250px;
    height: 250px;
    display: block;
}
.cam-ring {
    position: absolute;
    left: 63px;
    top: 63px;
    width: 124px;
    height: 124px;
    border: 3px solid white;
    border-radius: 50%;
}
.cam-bottom {
    flex: none;
    height: 129px;
    padding-right: 17px;
    background: black;
    display: flex;
    align-items: center;
    justify-content: center;
}
.shutter {
    width: 71px;
    height: 71px;
    border: 3px solid white;
    border-radius: 50%;
    background: #d9d9d9;
}

/* arrows */
.flows {
    position: absolute;
    left: 0;
    top: 0;
    width: 3129px;
    height: 3108px;
}
.flow-line,
.flow-head {
    fill: none;
    stroke: #ff0000;
    stroke-width: 6;
}
.flow-head {
    stroke-linecap: round;
    stroke-linejoin: round;
}
.flow-label {
    fill: #ff0000;
    font-family: Roboto, sans-serif;
    font-size: 20px;
    font-weight: 500;
    text-anchor: middle;
}
.flow-big {
    font-size: 36px;
}
```
